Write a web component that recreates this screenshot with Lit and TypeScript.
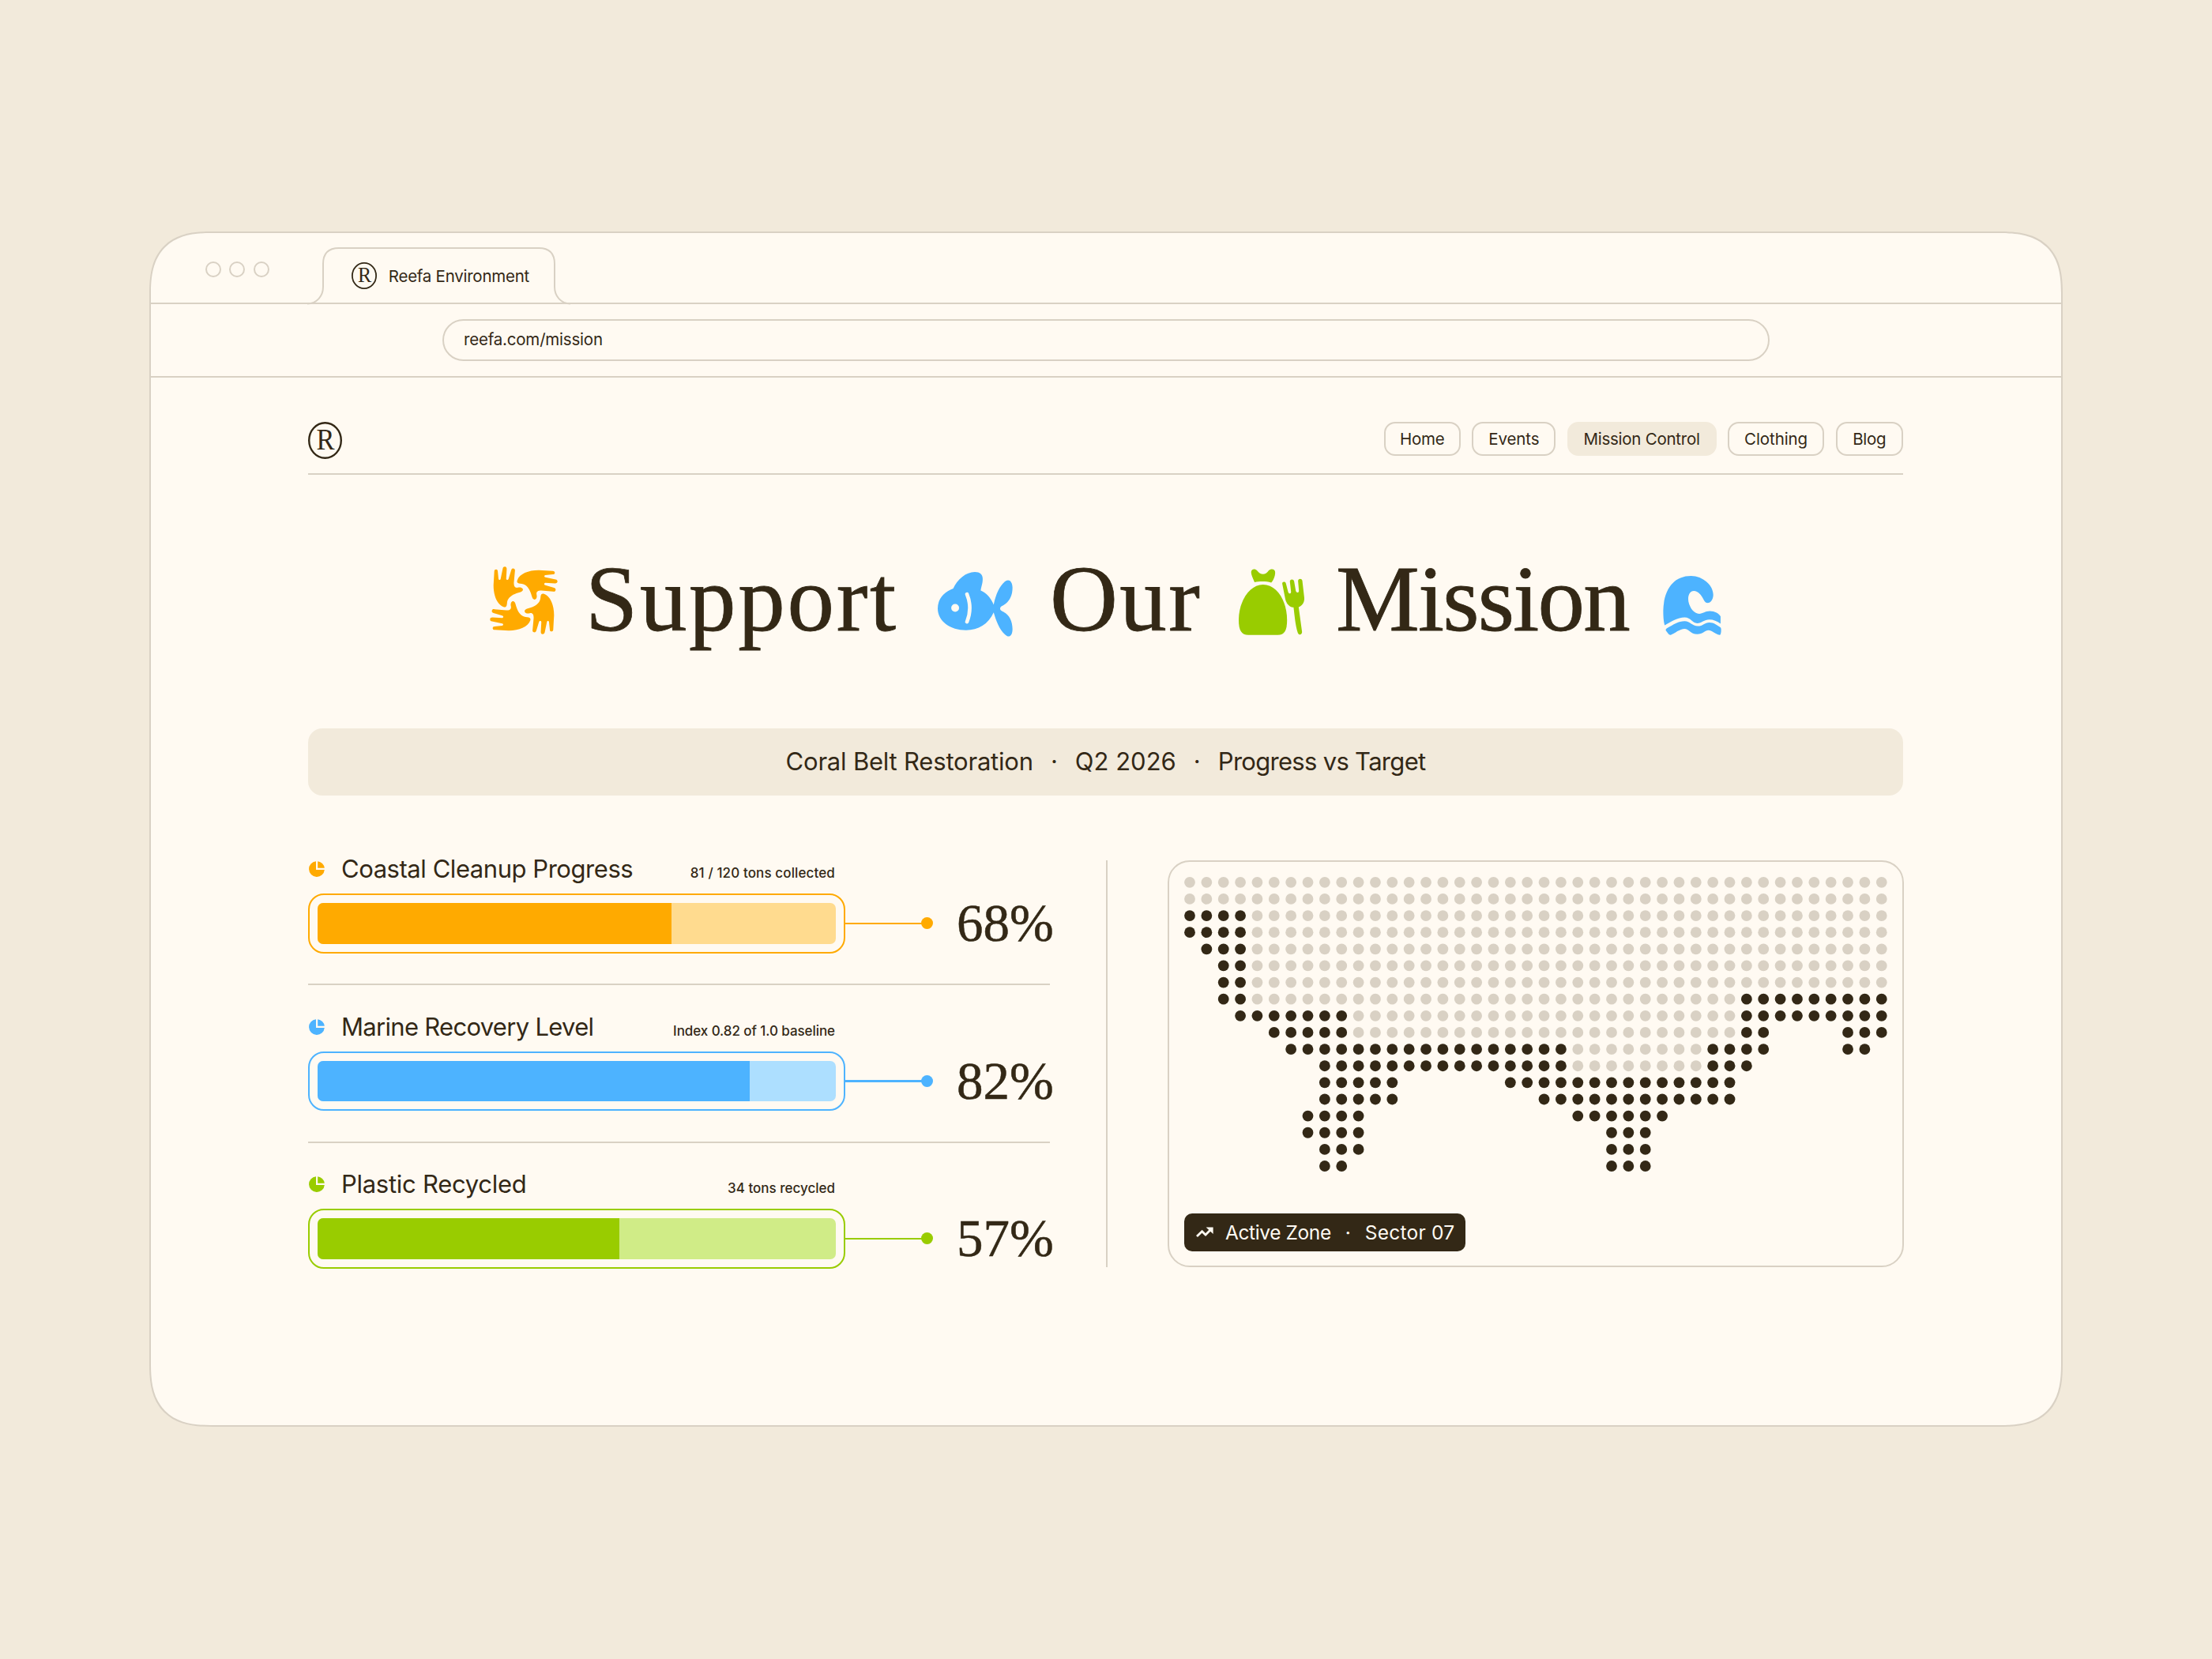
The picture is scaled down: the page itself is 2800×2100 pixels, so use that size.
import { LitElement, html, css, svg } from 'lit'
import { customElement, property } from 'lit/decorators.js'

interface Metric {
    tone: string
    title: string
    note: string
    fill: number
    value: string
}

const METRICS: Metric[] = [
    { tone: 'amber', title: 'Coastal Cleanup Progress', note: '81 / 120 tons collected', fill: 68.3, value: '68%' },
    { tone: 'blue', title: 'Marine Recovery Level', note: 'Index 0.82 of 1.0 baseline', fill: 83.4, value: '82%' },
    { tone: 'green', title: 'Plastic Recycled', note: '34 tons recycled', fill: 58.2, value: '57%' },
]

const NAV = [
    { label: 'Home', id: 'home' },
    { label: 'Events', id: 'events' },
    { label: 'Mission Control', id: 'mission' },
    { label: 'Clothing', id: 'clothing' },
    { label: 'Blog', id: 'blog' },
]

// '#' coast, '.' water, ' ' nothing
const MAP_ROWS = [
    '.'.repeat(42),
    '.'.repeat(42),
    '####' + '.'.repeat(38),
    '####' + '.'.repeat(38),
    ' ###' + '.'.repeat(38),
    '  ##' + '.'.repeat(38),
    '  ##' + '.'.repeat(38),
    '  ##' + '.'.repeat(29) + '#########',
    '   #######' + '.'.repeat(23) + '#########',
    '     #####' + '.'.repeat(23) + '##    ###',
    '      #################........####    ##',
    '        ###############........###',
    '        #####      ##############',
    '        #####        ############',
    '       ####            ######',
    '       ####              ###',
    '        ###              ###',
    '        ##               ###',
]

@customElement('reefa-mark')
export class ReefaMark extends LitElement {
    static styles = css`
        :host {
            display: block;
        }

        svg {
            display: block;
            width: 100%;
            height: 100%;
        }

        text {
            font-family: 'Liberation Serif', serif;
            font-size: 37px;
            fill: #332816;
        }
    `

    render() {
        return html`
            <svg viewBox="0 0 43 47" preserveAspectRatio="none">
                <ellipse cx="21.5" cy="23.5" rx="20.3" ry="22.3" fill="none" stroke="#332816" stroke-width="2.4" />
                <text x="10.6" y="35.2" textLength="23" lengthAdjust="spacingAndGlyphs">R</text>
            </svg>
        `
    }
}

@customElement('metric-row')
export class MetricRow extends LitElement {
    @property({ attribute: false }) metric!: Metric

    static styles = css`
        :host {
            display: block;
        }

        .metric {
            color: #332816;
        }

        .amber {
            --tone: #ffaa00;
            --soft: #ffdb8f;
            --title-spacing: -0.45px;
            --note-spacing: 0.12px;
        }

        .blue {
            --tone: #4db3ff;
            --soft: #addfff;
            --title-spacing: -0.7px;
            --note-spacing: -0.07px;
        }

        .green {
            --tone: #99cc00;
            --soft: #d0ec87;
            --title-spacing: -0.28px;
            --note-spacing: 0;
        }

        .head {
            display: flex;
            align-items: baseline;
            width: 667px;
            height: 42px;
            line-height: 22px;
        }

        .pie {
            align-self: flex-start;
            width: 20px;
            height: 20px;
            margin: 1px 21px 0 1px;
            fill: var(--tone);
        }

        .title {
            font-size: 31px;
            letter-spacing: var(--title-spacing);
        }

        .note {
            margin-left: auto;
            font-size: 17px;
            font-weight: 500;
            letter-spacing: var(--note-spacing);
        }

        .row {
            display: flex;
            align-items: center;
            height: 75.5px;
        }

        .row > * {
            flex: none;
        }

        .frame {
            box-sizing: border-box;
            width: 680px;
            height: 75.5px;
            padding: 10px;
            border: 2.4px solid var(--tone);
            border-radius: 20px;
        }

        .track {
            height: 100%;
            border-radius: 7px;
            background: var(--soft);
            overflow: hidden;
        }

        .fill {
            height: 100%;
            background: var(--tone);
        }

        .line {
            width: 98px;
            height: 2.4px;
            background: var(--tone);
        }

        .knob {
            width: 15px;
            height: 15px;
            margin-left: -2px;
            border-radius: 50%;
            background: var(--tone);
        }

        .value {
            width: 183px;
            text-align: center;
            font-family: 'Liberation Serif', serif;
            font-size: 67px;
            line-height: 75px;
            -webkit-text-stroke: 0.5px #332816;
        }
    `

    render() {
        const { tone, title, note, fill, value } = this.metric
        return html`
            <div class="metric ${tone}">
                <div class="head">
                    <svg class="pie" viewBox="0 0 20 20">
                        <path d="M9 .2V11H19.8A9.9 9.9 0 1 1 9 .2Z" />
                        <path d="M11.2 .2A9.9 9.9 0 0 1 19.8 8.8H11.2Z" />
                    </svg>
                    <span class="title">${title}</span>
                    <span class="note">${note}</span>
                </div>
                <div class="row">
                    <div class="frame">
                        <div class="track"><div class="fill" style="width: ${fill}%"></div></div>
                    </div>
                    <div class="line"></div>
                    <div class="knob"></div>
                    <div class="value">${value}</div>
                </div>
            </div>
        `
    }
}

@customElement('zone-map')
export class ZoneMap extends LitElement {
    static styles = css`
        :host {
            display: block;
        }

        .card {
            box-sizing: border-box;
            display: flex;
            flex-direction: column;
            justify-content: space-between;
            align-items: flex-start;
            height: 515px;
            padding: 18px 18px 18px 19px;
            border: 2px solid #d9d1c4;
            border-radius: 28px;
        }

        .dots {
            display: block;
        }

        .land {
            fill: #332816;
        }

        .sea {
            fill: #d9d1c4;
        }

        .tag {
            display: flex;
            align-items: center;
            box-sizing: border-box;
            width: 356px;
            height: 48px;
            padding-left: 15px;
            border-radius: 10px;
            background: #332816;
            color: #fffaf2;
            font-size: 24.5px;
            white-space: pre;
        }

        .trend {
            margin-right: 15px;
        }

        .zone {
            letter-spacing: -0.4px;
        }

        .sector {
            letter-spacing: 0.25px;
        }

        .sep {
            width: 43px;
            text-align: center;
        }
    `

    render() {
        return html`
            <div class="card">
                <svg class="dots" width="891" height="375">
                    ${MAP_ROWS.map((row, r) =>
                        [...row].map((cell, c) =>
                            cell === ' '
                                ? null
                                : svg`<circle class=${cell === '#' ? 'land' : 'sea'} cx=${7 + c * 21.36} cy=${7.8 + r * 21.13} r="6.9" />`
                        )
                    )}
                </svg>
                <div class="tag">
                    <svg class="trend" width="22" height="14" viewBox="0 0 22 14">
                        <path d="M1 12L7.6 5.8L12 10L18 4" fill="none" stroke="#fffaf2" stroke-width="2.8" />
                        <path d="M12.6 .5H21.6V9Z" fill="#fffaf2" />
                    </svg>
                    <span class="zone">Active Zone</span><span class="sep">·</span><span class="sector">Sector 07</span>
                </div>
            </div>
        `
    }
}

@customElement('app-root')
export class AppRoot extends LitElement {
    static styles = css`
        :host {
            display: block;
            box-sizing: border-box;
            width: 2800px;
            height: 2100px;
            padding: 293px 189px;
            background: #f2eadb;
            color: #332816;
            font-family: Inter, sans-serif;
        }

        .window {
            box-sizing: border-box;
            width: 2422px;
            height: 1513px;
            border: 2px solid #d9d1c4;
            border-radius: 62px;
            background: #fffaf2;
            overflow: hidden;
        }

        @supports (corner-shape: superellipse(1.4)) {
            .window {
                border-radius: 80px;
                corner-shape: superellipse(1.4);
            }
        }

        .tabs {
            box-sizing: border-box;
            display: flex;
            height: 90px;
            padding-left: 69px;
            border-bottom: 2px solid #d9d1c4;
        }

        .lights {
            display: flex;
            gap: 10.4px;
            margin-top: 36px;
        }

        .light {
            box-sizing: border-box;
            width: 20px;
            height: 20px;
            border: 2px solid #d9d1c4;
            border-radius: 50%;
        }

        .tab {
            position: relative;
            display: flex;
            align-items: center;
            width: 333px;
            height: 72px;
            margin: 18px 0 0 48px;
        }

        .outline {
            position: absolute;
            inset: 0;
            overflow: visible;
        }

        .tab reefa-mark {
            width: 32px;
            height: 34px;
            margin: 0 15px 0 56px;
        }

        .tab-title {
            font-size: 20.5px;
            letter-spacing: -0.25px;
        }

        .toolbar {
            box-sizing: border-box;
            height: 93px;
            padding: 19px 369px 0;
            border-bottom: 2px solid #d9d1c4;
        }

        .address {
            box-sizing: border-box;
            height: 53px;
            padding-left: 25px;
            border: 2px solid #d9d1c4;
            border-radius: 27px;
            font-size: 20.5px;
            line-height: 47px;
            letter-spacing: -0.2px;
        }

        .page {
            padding: 56px 200px 0 199px;
        }

        header {
            box-sizing: border-box;
            display: flex;
            justify-content: space-between;
            align-items: flex-start;
            height: 67px;
            border-bottom: 2px solid #d9d1c4;
        }

        header reefa-mark {
            width: 43px;
            height: 47px;
        }

        nav {
            display: flex;
            gap: 14.3px;
        }

        .link {
            box-sizing: border-box;
            height: 43px;
            border: 2px solid #d9d1c4;
            border-radius: 14px;
            font-size: 20.5px;
            line-height: 39px;
            letter-spacing: -0.25px;
            text-align: center;
        }

        .home {
            width: 97.5px;
        }

        .events {
            width: 106px;
            letter-spacing: -0.1px;
        }

        .mission {
            width: 189px;
            border-color: #f2eadb;
            background: #f2eadb;
        }

        .clothing {
            width: 122.3px;
            letter-spacing: -0.1px;
        }

        .blog {
            width: 85.5px;
        }

        .hero {
            display: flex;
            align-items: flex-start;
            height: 119px;
            margin: 98px 0 0;
            padding-left: 230px;
            font: 400 119px/119px 'Liberation Serif', serif;
            -webkit-text-stroke: 0.8px #332816;
        }

        .hero svg {
            flex: none;
            display: block;
        }

        .hands {
            margin-top: 18px;
            fill: #ffaa00;
        }

        .fish {
            margin-top: 25px;
            fill: #4db3ff;
        }

        .bag {
            margin-top: 21px;
            fill: #99cc00;
        }

        .wave {
            margin-top: 30px;
            fill: #4db3ff;
        }

        .support {
            box-sizing: border-box;
            width: 481px;
            padding-left: 35px;
            letter-spacing: 2.7px;
        }

        .our {
            box-sizing: border-box;
            width: 286px;
            padding-left: 47px;
            letter-spacing: 2.4px;
        }

        .mission-word {
            box-sizing: border-box;
            width: 454px;
            padding-left: 40px;
            letter-spacing: -1.8px;
        }

        .banner {
            display: flex;
            justify-content: center;
            height: 85px;
            margin-top: 104px;
            border-radius: 18px;
            background: #f2eadb;
            font-size: 31px;
            line-height: 84px;
        }

        .belt {
            letter-spacing: -0.2px;
        }

        .versus {
            letter-spacing: -0.7px;
        }

        .banner-sep {
            width: 53px;
            text-align: center;
        }

        .board {
            display: flex;
            margin-top: 82px;
        }

        .metrics {
            flex: none;
            width: 939px;
        }

        metric-row + metric-row {
            margin-top: 38.5px;
            padding-top: 41.6px;
            border-top: 2px solid #d9d1c4;
        }

        .rule {
            flex: none;
            width: 2px;
            height: 515px;
            margin: 0 76px 0 71px;
            background: #d9d1c4;
        }

        zone-map {
            flex: 1;
        }
    `

    renderHands() {
        const hand =
            'M41 42C41 36 44 34 48 34C52 34 54 37 54 41L57 70C58 75 64 75 65 70L73 31C74 26 77 24 81 24C86 24 88 28 88 33L86 70C87 75 93 76 95 70L105 37C107 32 109 30 114 31C119 32 120 36 119 41L115 85C115 98 119 105 130 103C138 101 144 102 148 107C152 113 146 118 140 120C118 126 104 132 94 146C88 155 90 163 88 170C86 177 81 178 76 176C52 168 38 134 38 95Z'
        return html`
            <svg class="hands" width="86" height="86" viewBox="24 23 257 257">
                ${[0, 90, 180, 270].map(
                    (a) => svg`<path d=${hand} stroke="none" transform="rotate(${a} 152.5 151.5)" />`
                )}
            </svg>
        `
    }

    renderFish() {
        return html`
            <svg class="fish" width="95" height="82" viewBox="76 104 267 245" preserveAspectRatio="none">
                <path
                    d="M76 242C76 206 98 180 131 167C146 132 176 104 208 104C226 104 236 114 236 130C236 150 230 160 229 174C250 184 266 203 275 228C282 190 298 150 320 137C330 131 342 140 342 164C342 198 328 220 308 231C301 234 298 238 298 242C298 247 301 250 308 254C330 264 342 290 342 320C342 343 332 352 322 346C298 330 284 290 275 257C256 302 220 324 177 324C120 324 76 290 76 242Z"
                />
                <ellipse cx="138" cy="240" rx="14" ry="15" fill="#fffaf2" />
                <path d="M180 188Q200 240 180 293" fill="none" stroke="#fffaf2" stroke-width="13" stroke-linecap="round" />
            </svg>
        `
    }

    renderBag() {
        return html`
            <svg class="bag" width="83" height="84" viewBox="1142 92 232 251" preserveAspectRatio="none">
                <path
                    d="M1198 143C1192 128 1186 115 1186 105C1186 92 1200 90 1207 99C1220 117 1236 117 1248 99C1256 90 1271 92 1271 106C1271 120 1264 138 1257 144C1240 139 1215 139 1198 143Z"
                />
                <path
                    d="M1228 152C1278 152 1313 215 1313 286C1313 325 1304 342 1280 342H1176C1152 342 1142 325 1142 286C1142 215 1180 152 1228 152Z"
                />
                <path
                    d="M1296 148C1296 139 1307 139 1309 147L1317 180C1319 188 1328 187 1327 178L1323 140C1323 130 1336 130 1338 139L1344 176C1346 184 1355 184 1355 175L1352 138C1352 128 1365 127 1367 137L1374 202C1375 220 1366 232 1354 237L1366 330C1367 342 1355 345 1351 334C1342 305 1340 270 1336 238C1320 237 1309 222 1306 202Z"
                />
            </svg>
        `
    }

    renderWave() {
        return html`
            <svg class="wave" width="74" height="75" viewBox="1248 119 208 224" preserveAspectRatio="none">
                <path
                    d="M1254 306C1250 290 1249 270 1249 250C1251 170 1286 119 1348 119C1390 119 1427 155 1427 190C1427 205 1420 221 1407 221C1400 221 1396 215 1393 209C1385 192 1373 176 1358 176C1345 176 1338 190 1338 206C1338 230 1355 262 1377 262C1390 262 1398 252 1415 252C1432 252 1448 262 1453 272V300C1440 290 1428 284 1413 284C1395 284 1385 298 1370 298C1352 298 1348 276 1325 276C1300 276 1278 292 1254 306Z"
                />
                <path
                    d="M1262 317C1285 303 1304 290 1325 290C1345 290 1352 309 1372 309C1390 309 1396 295 1413 295C1430 295 1442 306 1453 314Q1456 318 1455 328Q1454 342 1450 342C1432 338 1422 324 1410 324C1398 324 1390 339 1370 339C1345 339 1340 319 1325 319C1308 319 1290 336 1276 342Q1270 343 1266 336L1258 325Q1257 320 1262 317Z"
                />
            </svg>
        `
    }

    render() {
        return html`
            <div class="window">
                <div class="tabs">
                    <div class="lights">
                        <div class="light"></div>
                        <div class="light"></div>
                        <div class="light"></div>
                    </div>
                    <div class="tab">
                        <svg class="outline" width="333" height="72">
                            <path
                                d="M0 71.5C12 71 20 62 20 50V21Q20 1 40 1H293Q313 1 313 21V50C313 62 321 71 333 71.5"
                                fill="none"
                                stroke="#d9d1c4"
                                stroke-width="2"
                            />
                        </svg>
                        <reefa-mark></reefa-mark>
                        <span class="tab-title">Reefa Environment</span>
                    </div>
                </div>
                <div class="toolbar">
                    <div class="address">reefa.com/mission</div>
                </div>
                <div class="page">
                    <header>
                        <reefa-mark></reefa-mark>
                        <nav>${NAV.map((item) => html`<div class="link ${item.id}">${item.label}</div>`)}</nav>
                    </header>
                    <div class="hero">
                        ${this.renderHands()}
                        <span class="support">Support</span>
                        ${this.renderFish()}
                        <span class="our">Our</span>
                        ${this.renderBag()}
                        <span class="mission-word">Mission</span>
                        ${this.renderWave()}
                    </div>
                    <div class="banner">
                        <span class="belt">Coral Belt Restoration</span>
                        <span class="banner-sep">·</span>
                        <span>Q2 2026</span>
                        <span class="banner-sep">·</span>
                        <span class="versus">Progress vs Target</span>
                    </div>
                    <div class="board">
                        <div class="metrics">
                            ${METRICS.map((m) => html`<metric-row .metric=${m}></metric-row>`)}
                        </div>
                        <div class="rule"></div>
                        <zone-map></zone-map>
                    </div>
                </div>
            </div>
        `
    }
}
